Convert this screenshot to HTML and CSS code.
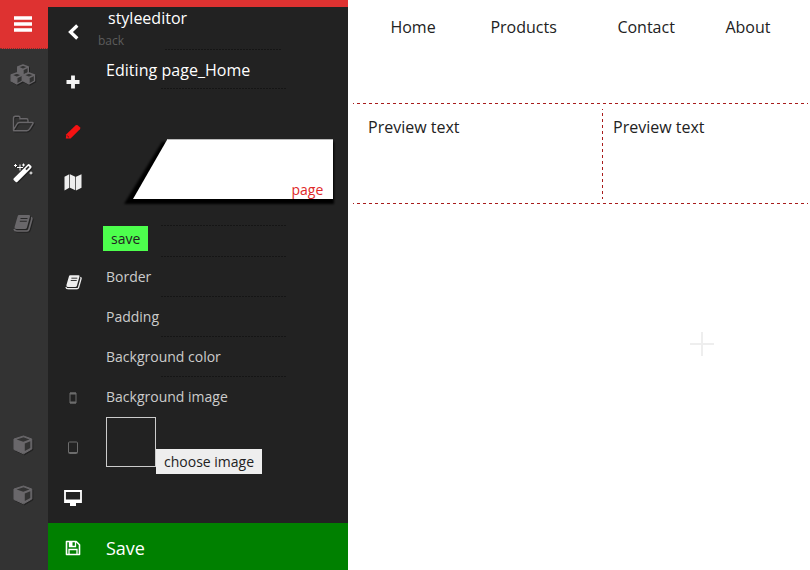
FILE: index.html
```
<!DOCTYPE html>
<html lang="en">
<head>
<meta charset="utf-8">
<title>styleeditor</title>
<link rel="stylesheet" href="styles.css">
</head>
<body>
<svg class="defs" width="0" height="0">
  <symbol id="cube" viewBox="0 0 20 20">
    <path d="M10.500 1 18.800 4v10L10.500 18.800 1 14.500V4Z" fill="currentColor" stroke="currentColor" stroke-linejoin="round"/>
    <path d="M10.500 2.200 16.500 4.400 10.300 6.800 3.600 4.400ZM11.800 8.600l5.500-2.300v6.600l-5.500 3.200Z" fill="#333"/>
  </symbol>
  <symbol id="book" viewBox="0 0 20 18">
    <path d="M6 1h10q1.500 0 1 1.500l-3 11q-.4 1.500-2 1.500H3.400q-2.400 0-1.700-2.400L4.600 2.400Q5 1 6 1Z" fill="currentColor"/>
    <path d="M18 3.500q1.200.4.800 1.800l-2.800 10Q15.500 17 14 17H4q-2.400 0-3-2" fill="none" stroke="currentColor" stroke-width="1.600"/>
    <path d="M7.500 4.500h7M6.800 7.200h7" stroke="#292929" stroke-width="1.100"/>
  </symbol>
</svg>
<div class="app">
  <nav class="rail">
    <a class="menu"><svg width="18" height="16"><path d="M0 2h18M0 8h18M0 14h18" stroke="#fff" stroke-width="3.400"/></svg></a>
    <a class="cell"><svg width="26" height="21" viewBox="0 0 26 21"><g fill="#333" stroke="currentColor" stroke-width="1.400" stroke-linejoin="round"><path d="M13 1l5.300 2v5.700L13 11.500 7.700 8.700V3Z"/><path d="M7.700 3 13 5.500 18.300 3M13 5.500v6"/><path d="M6.800 9l5.500 2v6l-5.500 3L1.200 17v-6Z"/><path d="M19 9l5.500 2v6L19 20l-5.700-3v-6Z"/><path d="M1.200 11 6.800 13.500 12.300 11M6.800 13.500V20M13.300 11 19 13.500 24.500 11M19 13.500V20"/></g><path d="M7.700 3 13 5.500v6L7.700 8.700ZM1.200 11l5.600 2.500V20l-5.600-3ZM13.300 11l5.700 2.500V20l-5.700-3Z" fill="currentColor"/></svg></a>
    <a class="cell"><svg width="22" height="18" viewBox="0 0 22 18"><path d="M1.500 15V3q0-1.800 1.800-1.800h3.200q1.500 0 1.500 1.500v1h6.500q1.500 0 1.500 1.500v2.300M1.500 15 5 9q.8-1.500 2.500-1.500h12.700q1.500 0 .6 1.400L17.500 14q-1 1.800-2.600 1.800H2.500q-1 0-1-.8Z" fill="none" stroke="currentColor" stroke-width="1.400"/></svg></a>
    <a class="cell wand"><svg width="20" height="20" viewBox="0 0 20 20"><path d="M.900 15.300 14.500 1.700q1.200-1.200 2.400 0l1.100 1.100q1.200 1.200 0 2.400L4.500 18.800q-1 1-2 0l-1.600-1.500q-1-1 0-2Z" fill="#fff"/><path d="m13 6.700 3-3.200" stroke="#333" stroke-width="1.800"/><path d="M7 1.500v6M4 4.500h6M2.500 1v3M1 2.500h3M10.500.500v3M9 2h3M18 8.500v3M16.500 10h3" stroke="#fff"/></svg></a>
    <a class="cell ledger"><svg width="20" height="18"><use href="#book"/></svg></a>
    <span class="spacer"></span>
    <a class="cell"><svg width="20" height="20"><use href="#cube"/></svg></a>
    <a class="cell"><svg width="20" height="20"><use href="#cube"/></svg></a>
  </nav>

  <section class="panel">
    <div class="panel-main">
      <nav class="tools">
        <a class="tool"><svg width="16" height="16" viewBox="0 0 16 16"><path d="M12.300 1.500 5.500 8l6.800 6.500" fill="none" stroke="#fff" stroke-width="3.300"/></svg></a>
        <a class="tool"><svg width="14" height="14"><path d="M7 .500v13M.500 7h13" stroke="#f4f4f4" stroke-width="3.800"/></svg></a>
        <a class="tool"><svg width="16" height="16" viewBox="0 0 16 16"><path d="M.800 14.500 1.400 10.200 10.700 1.300q1-.8 2 0l2.200 2q1 1 0 2L5.600 14.500Z" fill="#f51212"/><path d="m2.300 11.800 1.700 1.500" stroke="#222" stroke-width=".8"/></svg></a>
        <a class="tool"><svg width="18" height="17" viewBox="0 0 18 17"><path d="M.500 2.800 5.300.300v13.400L.500 16.500ZM6 .300l5.300 2.500v13.500L6 13.700ZM12 2.800 17.500.300v13.400L12 16.400Z" fill="#eee"/></svg></a>
        <span class="tool"></span>
        <a class="tool book"><svg width="17" height="16" viewBox="0 0 20 18"><use href="#book" width="20" height="18"/></svg></a>
        <span class="spacer"></span>
        <a class="tool dim"><svg width="8" height="12"><path d="M1 1h6v10H1Z" fill="none" stroke="currentColor"/><path d="M1 1.500h6M1 10.500h6" stroke="currentColor" stroke-width="2"/></svg></a>
        <a class="tool dim"><svg width="12" height="14"><rect x="1.500" y="1" width="9" height="11.500" rx="1" fill="none" stroke="currentColor"/><path d="M2 11.500h8" stroke="currentColor"/></svg></a>
        <a class="tool"><svg width="18" height="16" viewBox="0 0 18 16"><path d="M1 1h16v11H1Z" fill="none" stroke="#fff" stroke-width="1.800"/><path d="M1 11h16M9 11v4M6 14.500h6" stroke="#fff" stroke-width="3"/></svg></a>
      </nav>

      <div class="editor">
        <header class="head">
          <div class="title">styleeditor</div>
          <a class="back">back</a>
        </header>
        <hr class="rule short">
        <h2 class="editing">Editing page_Home</h2>
        <hr class="rule">
        <div class="shape">
          <svg class="shape-bg" width="230" height="84" viewBox="0 0 230 84">
            <defs><filter id="soft" x="-10%" y="-10%" width="120%" height="120%"><feGaussianBlur stdDeviation="1"/></filter></defs>
            <path d="M44 13h172v62H6Z" fill="#050505" filter="url(#soft)"/>
            <path d="M49.500 10H215v60H15Z" fill="#fff"/>
            <path d="M49.500 10.500H215" stroke="#bbb"/>
            <text class="shape-label" x="173.500" y="66">page</text>
          </svg>
        </div>
        <hr class="rule">
        <div class="save-row"><button class="btn-save">save</button></div>
        <hr class="rule">
        <div class="prop">Border</div>
        <hr class="rule">
        <div class="prop">Padding</div>
        <hr class="rule">
        <div class="prop">Background color</div>
        <hr class="rule">
        <div class="prop">Background image</div>
        <div class="image-row"><div class="thumb"></div><button class="choose">choose image</button></div>
      </div>
    </div>
    <footer class="save-bar">
      <svg width="16" height="16" viewBox="0 0 16 16"><path d="M1.500 1.500h9.700l3.300 3.300v9.700h-13Z" fill="none" stroke="#fff" stroke-width="1.600" stroke-linejoin="round"/><path d="M4.500 1.500v5h6v-5M4 14V9.500h8V14" fill="none" stroke="#fff" stroke-width="1.300"/><path d="M4.500 2h3v4h-3Z" fill="#fff"/></svg>
      <span>Save</span>
    </footer>
  </section>

  <main class="preview">
    <nav class="site-nav"><a>Home</a><a>Products</a><a>Contact</a><a>About</a></nav>
    <hr class="dash">
    <div class="columns">
      <div class="col">Preview text</div>
      <div class="divider"></div>
      <div class="col">Preview text</div>
    </div>
    <hr class="dash">
    <svg class="add" width="24" height="24"><path d="M12 0v24M0 12h24" stroke="#eee" stroke-width="2"/></svg>
  </main>
</div>
</body>
</html>
```
FILE: styles.css
```
* { box-sizing: border-box; }
body { margin: 0; background: #fff; font: 14px/20px "Open Sans", sans-serif; }
svg { display: block; }
.defs { position: absolute; }
.app { display: grid; grid-template-columns: 48px 300px 1fr; height: 570px; overflow: hidden; }

.rail { display: flex; flex-direction: column; background: #333; color: #69676a; padding-bottom: 50px; padding-right: 3px; }
.menu { height: 49px; margin-right: -3px; background: #de3231; display: flex; align-items: center; justify-content: center; padding-right: 2px; border-bottom: 1px dotted #7d3030; }
.cell { height: 50px; display: flex; align-items: center; justify-content: center; }
.cell svg { filter: drop-shadow(1px 1px 0 #222); }
.wand, .ledger { padding-bottom: 2px; }
.spacer { flex: 1; }

.panel { display: flex; flex-direction: column; background: #222; border-top: 7px solid #de3231; }
.panel-main { display: grid; grid-template-columns: 50px 1fr; flex: 1; min-height: 0; }
.tools { display: flex; flex-direction: column; }
.tool { height: 50px; display: flex; align-items: center; justify-content: center; }
.book { color: #eee; }
.dim { color: #6c6c6c; }

.head { height: 42px; }
.title { color: #fff; font-size: 16px; line-height: 23px; padding-left: 10px; }
.back { display: block; color: #5c5c5c; font-size: 12px; line-height: 21px; }
.rule { width: 125px; height: 1px; margin: 0 0 0 63px; border: 0; background: repeating-linear-gradient(90deg, #151515 0 2px, #222 2px 3px); }
.short { width: 117px; margin-left: 67px; }
.editing { margin: 0; padding-left: 8px; color: #fff; font-size: 16px; font-weight: 400; line-height: 40px; height: 38px; letter-spacing: .04px; }
.shape { height: 136px; padding: 40px 0 0 20px; }
.shape-label { fill: #df2929; font: 14px "Open Sans", sans-serif; }
.save-row { height: 30px; padding-left: 5px; }
button { display: block; border: 0; padding: 0 8px; height: 25px; font: 14px/25px "Open Sans", sans-serif; color: #222; }
.btn-save { background: #4dff4d; }
.prop { height: 39px; padding-left: 8px; line-height: 39px; color: #ccc; }
.image-row { display: flex; align-items: flex-start; padding: 1px 0 0 8px; }
.thumb { width: 50px; height: 50px; border: 1px solid #ccc; }
.choose { background: #eee; margin-top: 32px; }
.save-bar { height: 47px; display: grid; grid-template-columns: 50px 1fr; align-items: center; background: #008000; color: #fff; font-size: 18px; padding-top: 3px; }
.save-bar svg { justify-self: center; }
.save-bar span { padding-left: 8px; }

.preview { font-size: 16px; color: #222; padding-right: 2px; }
.site-nav { display: grid; grid-template-columns: 100px 127px 108px 1fr; padding-left: 42.400px; height: 103px; line-height: 54px; }
.dash { height: 1px; margin: 0 0 0 5px; border: 0; background: repeating-linear-gradient(90deg, #a81c1c 0 1px, #fff 1px 4px, #a81c1c 4px 6px); }
.columns { display: grid; grid-template-columns: 249px 1px 1fr; height: 99px; margin-left: 5px; padding-top: 5px; }
.col { padding-left: 15px; line-height: 36px; }
.col:last-child { padding-left: 10px; }
.divider { height: 90px; background: repeating-linear-gradient(#a81c1c 0 1px, #fff 1px 4px, #a81c1c 4px 6px); }
.add { margin: 128px 0 0 342px; }
```
